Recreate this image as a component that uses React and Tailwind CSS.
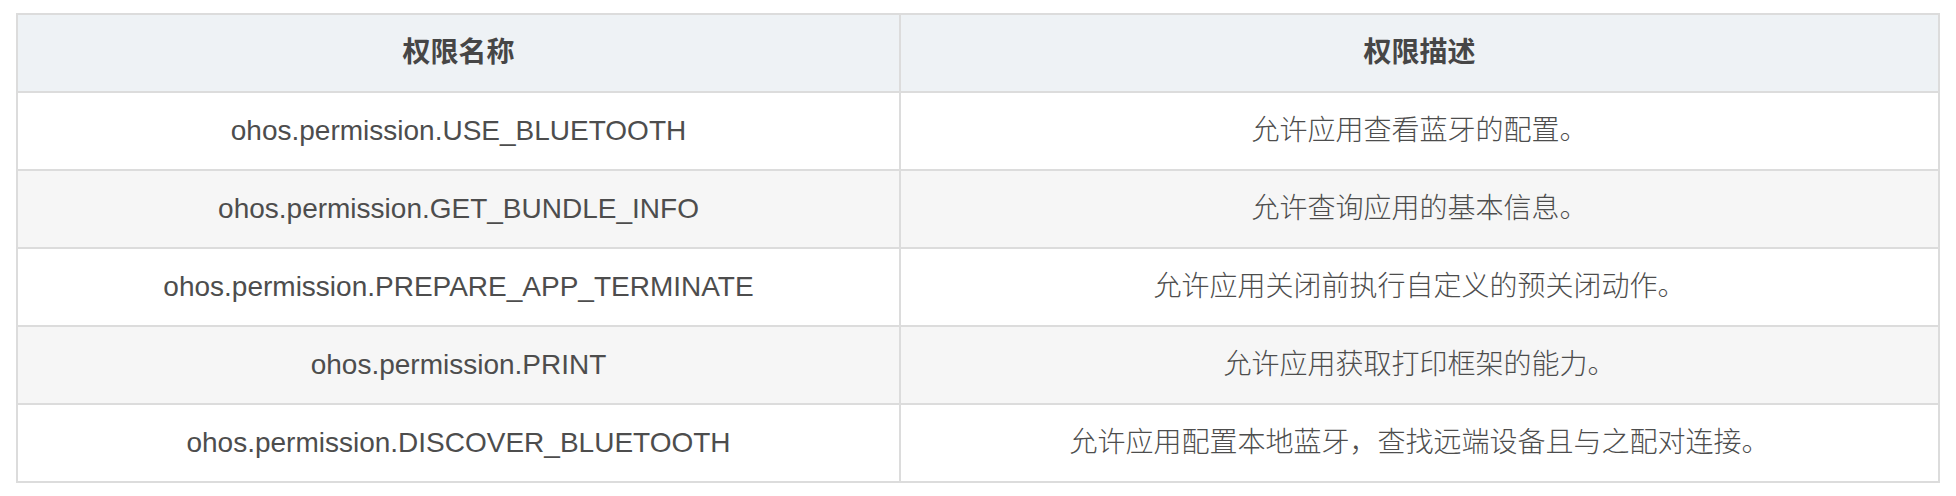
import React from "react";

const rows = [
  ["ohos.permission.USE_BLUETOOTH", "允许应用查看蓝牙的配置。"],
  ["ohos.permission.GET_BUNDLE_INFO", "允许查询应用的基本信息。"],
  ["ohos.permission.PREPARE_APP_TERMINATE", "允许应用关闭前执行自定义的预关闭动作。"],
  ["ohos.permission.PRINT", "允许应用获取打印框架的能力。"],
  ["ohos.permission.DISCOVER_BLUETOOTH", "允许应用配置本地蓝牙，查找远端设备且与之配对连接。"],
];

export default function App() {
  return (
    <div
      className="w-[1956px] h-[496px] bg-white pt-[13px] pl-[16px]"
      style={{ fontFamily: '"Liberation Sans", Arial, "Noto Sans CJK SC", sans-serif' }}
    >
      <div className="w-[1924px] grid grid-cols-[883px_1039px] border-t-2 border-l-2 border-[#dcdcdc] text-[28px] text-[#4d4d4d]">
        <div className="h-[78px] flex items-center justify-center bg-[#eef2f5] border-r-2 border-b-2 border-[#dcdcdc] font-bold text-[#464646]">
          权限名称
        </div>
        <div className="h-[78px] flex items-center justify-center bg-[#eef2f5] border-r-2 border-b-2 border-[#dcdcdc] font-bold text-[#464646]">
          权限描述
        </div>
        {rows.map(([a, b], i) => (
          <React.Fragment key={a}>
            <div
              className={`h-[78px] flex items-center justify-center border-r-2 border-b-2 border-[#dcdcdc] ${
                i % 2 === 1 ? "bg-[#f6f6f6]" : "bg-white"
              }`}
            >
              {a}
            </div>
            <div
              className={`h-[78px] flex items-center justify-center border-r-2 border-b-2 border-[#dcdcdc] font-light ${
                i % 2 === 1 ? "bg-[#f6f6f6]" : "bg-white"
              }`}
            >
              {b}
            </div>
          </React.Fragment>
        ))}
      </div>
    </div>
  );
}
